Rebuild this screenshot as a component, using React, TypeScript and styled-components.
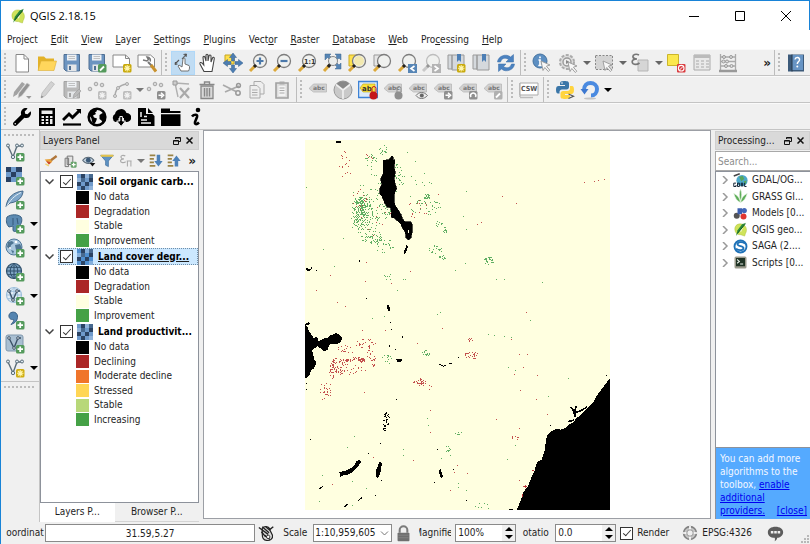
import React, { Fragment, useId } from "react";
import type { ReactNode } from "react";
import styled, { createGlobalStyle, css } from "styled-components";
import { FaWrench } from "react-icons/fa";

const UI_FONT = `"DejaVu Sans Condensed", "DejaVu Sans", "Noto Sans", sans-serif`;

const Global = createGlobalStyle`
  *, *::before, *::after { box-sizing: border-box; }
  html, body, #root { height: 100%; margin: 0; }
  body { background: #f0f0f0; color: #1e1e1e; font: 10px/14px ${UI_FONT}; overflow: hidden; }
  button, input, select { font: inherit; color: inherit; margin: 0; }
  svg { display: block; }
`;

/* ---------- layout ---------- */

const Window = styled.div`
  display: flex;
  flex-direction: column;
  height: 100vh;
  min-height: 400px;
  border: solid #1883d7;
  border-width: 1px 0 0 1px;
  background: #f0f0f0;
`;
const TitleBar = styled.header`
  display: flex;
  align-items: center;
  height: 29px;
  flex: none;
  padding-left: 9px;
  background: #fff;
  border-right: 1px solid #1883d7;
  color: #000;
`;
const AppTitle = styled.h1`
  flex: 1;
  margin: 0 0 0 4px;
  font: 400 11px/16px "Open Sans", "Noto Sans", sans-serif;
`;
const WindowButton = styled.button`
  display: grid;
  place-items: center;
  width: 46px;
  height: 29px;
  padding: 0;
  border: 0;
  background: none;
`;
const MenuBar = styled.nav`
  display: flex;
  align-items: center;
  flex: none;
  height: 19px;
  gap: 13px;
  padding-left: 6px;
  background: #fff;
`;
const MenuItem = styled.button`
  padding: 0;
  border: 0;
  background: none;
  line-height: 17px;
  white-space: nowrap;
`;
const ToolRow = styled.div`
  display: flex;
  flex: none;
  align-items: stretch;
  height: 27px;
  border-bottom: 1px solid #c4c4c4;
  border-top: 1px solid #fafafa;
`;
const ToolBar = styled.div<{ $last?: boolean; $lead?: boolean }>`
  display: flex;
  align-items: center;
  padding: 0 2px 0 3px;
  border: solid #bdbdbd;
  border-width: 0 ${(p) => (p.$last ? 0 : 1)}px 0 ${(p) => (p.$lead ? 1 : 0)}px;
`;
const Handle = styled.span`
  width: 2px;
  height: 20px;
  margin-right: 4px;
  background: repeating-linear-gradient(#bcbcbc 0 2px, transparent 2px 4px);
`;
const Tools = styled.div<{ $width: number }>`
  display: flex;
  align-items: center;
  justify-content: space-between;
  width: ${(p) => p.$width}px;
`;
const ToolButton = styled.button<{ $active?: boolean; $slim?: boolean }>`
  display: grid;
  place-items: center;
  flex: none;
  width: ${(p) => (p.$slim ? 8 : 24)}px;
  height: 24px;
  padding: 0;
  border: 1px solid ${(p) => (p.$active ? "#b0d8f8" : "transparent")};
  background: ${(p) => (p.$active ? "#c0dcf3" : "none")};
`;
const Spacer = styled.div`
  flex: 1;
`;
const More = styled.button`
  padding: 0 3px;
  border: 0;
  background: none;
  color: #222;
  font: 700 12px/14px "DejaVu Sans", sans-serif;
`;
const Body = styled.main`
  display: flex;
  flex: 1;
  min-height: 0;
`;
const SideBar = styled.div`
  display: flex;
  flex-direction: column;
  flex: none;
  width: 39px;
  border-right: 1px solid #c4c4c4;
`;
const SideHandle = styled.div`
  height: 2px;
  margin: 4px 3px;
  background: repeating-linear-gradient(90deg, #bcbcbc 0 2px, transparent 2px 4px);
`;
const SideRow = styled.div`
  display: flex;
  align-items: center;
  justify-content: space-between;
  height: 24px;
  padding: 0 2px;
`;
const SideEnd = styled.div`
  border-top: 1px solid #c4c4c4;
  margin-top: 1px;
`;
const Dock = styled.section<{ $width: number }>`
  display: flex;
  flex-direction: column;
  flex: none;
  width: ${(p) => p.$width}px;
  padding-top: 1px;
`;
const DockTitle = styled.div`
  display: flex;
  align-items: center;
  flex: none;
  height: 19px;
  padding: 0 2px;
  background: #d9d9d9;
  border: 1px solid #cfcfcf;
`;
const DockName = styled.h2`
  flex: 1;
  margin: 0;
  font: inherit;
  white-space: nowrap;
`;
const DockButton = styled.button`
  display: grid;
  place-items: center;
  width: 13px;
  height: 13px;
  padding: 0;
  border: 0;
  background: none;
  flex: none;
`;
const LayerTools = styled.div`
  display: flex;
  align-items: center;
  justify-content: space-between;
  flex: none;
  height: 21px;
  padding: 0 0 0 3px;
`;
const LayerTool = styled.button<{ $slim?: boolean }>`
  display: grid;
  place-items: center;
  width: ${(p) => (p.$slim ? 8 : 16)}px;
  height: 16px;
  padding: 0;
  border: 0;
  background: none;
`;
const LayerTree = styled.div`
  flex: 1;
  min-height: 0;
  padding-top: 1px;
  overflow: hidden;
  background: #fff;
  border: 1px solid #8d929b;
`;
const LayerHead = styled.div`
  display: flex;
  align-items: center;
  height: 17px;
  padding-left: 4px;
`;
const Twisty = styled.button`
  padding: 0;
  width: 13px;
  border: 0;
  background: none;
`;
const LayerTitle = styled.div<{ $selected?: boolean }>`
  display: flex;
  align-items: center;
  flex: 1;
  min-width: 0;
  height: 17px;
  padding-left: 1px;
  border: 1px dotted transparent;
  ${(p) =>
    p.$selected &&
    css`
      background: #cce8ff;
      border-color: #6f8ea8;
      text-decoration: underline;
    `}
`;
const LegendIcon = styled.span`
  margin-left: 4px;
`;
const LayerName = styled.label`
  margin-left: 5px;
  font-weight: 700;
  color: #000;
  white-space: nowrap;
`;
const Check = styled.input<{ $size: number }>`
  appearance: none;
  display: grid;
  place-items: center;
  flex: none;
  width: ${(p) => p.$size}px;
  height: ${(p) => p.$size}px;
  border: 1px solid #333;
  background: #fff;
  &:checked::after {
    content: "";
    width: 4px;
    height: 8px;
    margin-bottom: 2px;
    border: solid #333;
    border-width: 0 1px 1px 0;
    transform: rotate(42deg);
  }
`;
const Legend = styled.ul<{ $height: number }>`
  display: flex;
  flex-direction: column;
  height: ${(p) => p.$height}px;
  margin: 0;
  padding: 0 0 0 35px;
  list-style: none;
`;
const LegendRow = styled.li`
  display: flex;
  align-items: center;
  flex: 1;
  gap: 5px;
`;
const Swatch = styled.span<{ $color: string }>`
  width: 13px;
  height: 13px;
  background: ${(p) => p.$color};
`;
const Tabs = styled.div`
  display: flex;
  flex: none;
  height: 19px;
`;
const Tab = styled.button<{ $active?: boolean }>`
  flex: ${(p) => (p.$active ? 15 : 17)};
  padding: 0;
  border: solid ${(p) => (p.$active ? "#fff" : "#d4d4d4")};
  border-width: 0 0 1px;
  background: ${(p) => (p.$active ? "#fff" : "#f0f0f0")};
`;
const Canvas = styled.section`
  display: grid;
  place-items: center;
  flex: 1;
  min-width: 0;
  margin: 0 4px 3px;
  overflow: hidden;
  border: 1px solid #9c9fa5;
  background: #fff;
`;
const Search = styled.input`
  flex: none;
  width: 100%;
  height: 20px;
  margin-top: 1px;
  padding: 0 2px;
  border: 1px solid #a8a8a8;
  border-right: 0;
  background: #fff;
  &::placeholder { color: #8c8c8c; opacity: 1; }
`;
const ProviderPane = styled.div`
  flex: 1;
  min-height: 0;
  background: #fff;
  border: solid #8d929b;
  border-width: 1px 0 1px 1px;
  overflow: hidden;
`;
const Providers = styled.ul`
  display: flex;
  flex-direction: column;
  height: 99px;
  margin: 0;
  padding: 0;
  list-style: none;
`;
const Provider = styled.li`
  display: flex;
  align-items: center;
  flex: 1;
  padding-left: 4px;
  white-space: nowrap;
`;
const ProviderName = styled.span`
  margin-left: 4px;
`;
const Hint = styled.div`
  flex: none;
  padding: 4px 3px 2px 4px;
  margin-bottom: 3px;
  border-left: 1px solid #8d929b;
  background: #55aaff;
  color: #f4f8ff;
  line-height: 13px;
`;
const HintLink = styled.a`
  color: #0000f0;
`;
const CloseLink = styled(HintLink)`
  float: right;
`;
const StatusBar = styled.footer`
  display: flex;
  align-items: center;
  flex: none;
  height: 22px;
  padding-left: 4px;
`;
const StatusLabel = styled.label<{ $width: number }>`
  display: flex;
  justify-content: center;
  flex: none;
  width: ${(p) => p.$width}px;
  overflow: hidden;
  white-space: nowrap;
`;
const Gap = styled.div`
  padding: 0 4px 0 5px;
`;
const fieldBox = css`
  height: 18px;
  border: 1px solid #8a8a8a;
  background: #fff;
`;
const CoordField = styled.input`
  ${fieldBox}
  flex: 1 1 209px;
  min-width: 0;
  text-align: center;
`;
const StatusIcon = styled.button`
  display: grid;
  place-items: center;
  flex: none;
  width: 22px;
  height: 20px;
  padding: 0;
  border: 0;
  background: none;
`;
const Combo = styled.div`
  ${fieldBox}
  display: grid;
  align-items: center;
  flex: none;
  width: 79px;
`;
const ComboSelect = styled.select`
  grid-area: 1 / 1;
  appearance: none;
  width: 100%;
  height: 16px;
  padding: 0 0 0 1px;
  border: 0;
  background: none;
`;
const ComboArrow = styled.span`
  grid-area: 1 / 1;
  justify-self: end;
  padding-right: 2px;
  pointer-events: none;
`;
const Spin = styled.div`
  ${fieldBox}
  display: flex;
  flex: none;
  width: 61px;
`;
const SpinInput = styled.input`
  flex: 1;
  min-width: 0;
  padding: 0 0 0 2px;
  border: 0;
  background: none;
`;
const SpinButtons = styled.div`
  display: grid;
  width: 13px;
  background: #f0f0f0;
`;
const SpinButton = styled.button`
  display: grid;
  place-items: center;
  padding: 0;
  border: 0;
  background: none;
`;
const Crs = styled.button`
  display: flex;
  align-items: center;
  gap: 4px;
  margin-left: 13px;
  padding: 0;
  border: 0;
  background: none;
`;
const RenderCheck = styled.label`
  display: flex;
  align-items: center;
  gap: 4px;
  margin-left: 4px;
`;
const Bubble = styled(StatusIcon)`
  margin-left: 12px;
`;
const Grip = styled.span`
  align-self: flex-end;
  margin-left: 14px;
`;

/* ---------- icons ---------- */

const Ico = ({ s = 20, children }: { s?: number; children: ReactNode }) => (
  <svg width={s} height={s} viewBox="0 0 20 20" fill="none" aria-hidden="true">
    {children}
  </svg>
);
const Drop = ({ c = "#666" }: { c?: string }) => (
  <svg width="8" height="4" viewBox="0 0 8 4" aria-hidden="true"><path d="M0 0h8L4 4z" fill={c} /></svg>
);
const Lens = ({ handle = "#dca93a", ring = "#7d7d7d", children }: { handle?: string; ring?: string; children?: ReactNode }) => (
  <>
    <circle cx="12" cy="8" r="6.500" fill="#f0f1ef" stroke={ring} strokeWidth="1.300" />
    <path d="M7.500 12.500L2 18" stroke={handle} strokeWidth="3" />
    <path d="M8 12L6 14" stroke="#222" strokeWidth="3" opacity={handle === "#dca93a" ? 1 : 0.3} />
    {children}
  </>
);
const Badge = ({ c = "#549a5c", children }: { c?: string; children?: ReactNode }) => (
  <>
    <rect x="11" y="11" width="8.500" height="8.500" rx="1.500" fill={c} />
    {children ?? <path d="M15.200 12.500v5.500M12.500 15.200H18" stroke="#fff" strokeWidth="1.800" />}
  </>
);
const star = <path d="M15.200 12v6.500M12 15.200h6.500M13 13l4.500 4.500M17.500 13L13 17.500" stroke="#fff6b0" strokeWidth="1.100" />;
const grayStar = <path d="M15.200 12v6.500M12 15.200h6.500M13 13l4.500 4.500M17.500 13L13 17.500" stroke="#f2f2f2" strokeWidth="1.100" />;
const arrowR = <path d="M12.500 15.200H16M15 12.800l2.600 2.400-2.600 2.400" stroke="#fff" strokeWidth="1.500" />;
const Floppy = ({ a, b }: { a: string; b: string }) => (
  <>
    <path d="M2 1.500h15.500V18H4l-2-2z" fill={a} stroke={b} />
    <path d="M5 1.500h9.500v6H5z" fill="#eef1f4" />
    <path d="M6.500 3.500h6.500M6.500 5.500h6.500" stroke="#aaa" strokeWidth=".7" />
    <path d="M5.500 11.500h9V18h-9z" fill="#e4e6e8" /><path d="M7 13h2v4H7z" fill={b} />
  </>
);
const Tag = ({ children }: { children?: ReactNode }) => (
  <>
    <path d="M1.500 8l4-4h13v8h-13l-4-3z" fill="#d2d2d2" stroke="#b8b8b8" strokeWidth=".8" />
    <text x="5" y="10" fontSize="6" fontWeight="700" fontFamily="DejaVu Sans, sans-serif" fill="#777">abc</text>
    {children}
  </>
);
const Cursor = ({ x = 0, y = 0 }: { x?: number; y?: number }) => (
  <path transform={`translate(${x} ${y})`} d="M0 0l9 4-3.600 1.200 3.400 4-1.500 1.300-3.500-4L2 9.500z" fill="#f7f7f7" stroke="#999" strokeWidth=".9" />
);
const Globe = ({ c = "#4d7698", f = "#b9d2e6" }: { c?: string; f?: string }) => (
  <>
    <circle cx="9" cy="9" r="7.500" fill={f} stroke={c} strokeWidth="1.200" />
    <path d="M1.500 9h15M3 5.300h12M3 12.700h12M9 1.500v15M9 1.500c-5 4-5 11 0 15M9 1.500c5 4 5 11 0 15" stroke={c} strokeWidth="1" />
  </>
);
const Vee = ({ c = "#5b6e7a" }: { c?: string }) => (
  <>
    <path d="M3 4l5 11 4-11h5" stroke={c} strokeWidth="1.400" />
    <g fill="#dbe6ee" stroke={c}><circle cx="3" cy="3.500" r="1.500" /><circle cx="8" cy="15" r="1.700" /><circle cx="12" cy="3.500" r="1.500" /><circle cx="17" cy="3.500" r="1.500" /></g>
  </>
);
const Checker = ({ s = 20, tint = "#6f9acb" }: { s?: number; tint?: string }) => (
  <Ico s={s}>
    <rect width="20" height="20" fill={tint} />
    <path d="M5 0h5v5H5zM15 5h5v5h-5zM10 10h5v5h-5zM0 10h5v5H0zM5 15h5v5H5z" fill="#2b4363" />
    <path d="M10 0h5v5h-5zM0 5h5v5H0zM15 15h5v5h-5z" fill="#a9c5e4" opacity=".6" />
    <path d="M5 5h5v5H5zM15 0h5v5h-5z" fill="#47698f" />
  </Ico>
);
const QLogo = ({ s }: { s: number }) => (
  <Ico s={s}>
    <path d="M10.500 2.500C5 2 2 6 2.500 10.500c.4 4 3.500 6.800 8 6.500l5 1.800 1-3.300C20 10 17 3 10.500 2.500z" fill="#cfe35a" stroke="#a8bd33" strokeWidth=".6" />
    <path d="M10 6l3 2-2 5-3-1z" fill="#f6f9d8" />
    <path d="M17.500 1L4 18.500 6 11l6-8z" fill="#2b8a3a" /><path d="M16 3L6 15" stroke="#155c22" strokeWidth="1.300" />
  </Ico>
);
const Pin = ({ c }: { c: string }) => (
  <><path d="M14 12V8.500a2 2 0 014 0V12" stroke={c} strokeWidth="1" /><circle cx="15.500" cy="15.500" r="4" fill={c} /></>
);
const dots = (
  <g fill="#d8d8d8" stroke="#a6a6a6"><circle cx="3" cy="9" r="1.800" /><circle cx="9" cy="4" r="1.800" /><circle cx="15" cy="5" r="1.800" /></g>
);

type Tool = { name: string; icon?: ReactNode; active?: boolean; drop?: string };

const fileTools: Tool[] = [
  { name: "New", icon: <Ico><path d="M4 1.500h8l4.500 4.500v13H4z" fill="#fff" stroke="#888" /><path d="M12 1.500V6h4.500" stroke="#888" /></Ico> },
  { name: "Open", icon: <Ico><path d="M1 17V3.500h6l2 2h8V17z" fill="#e3b228" /><path d="M1 17.500L4 8h15.500L17 17.500z" fill="#ffd65c" stroke="#dcae35" strokeWidth=".6" /></Ico> },
  { name: "Save", icon: <Ico><Floppy a="#6c94c0" b="#4f6f93" /></Ico> },
  { name: "Save As", icon: <Ico><Floppy a="#6c94c0" b="#4f6f93" /><Badge><path d="M13 17.500l4-4" stroke="#fff" strokeWidth="1.800" /></Badge></Ico> },
  { name: "New Print Composer", icon: <Ico><path d="M1 2h12.500l4 3.500V14H1z" fill="#fff" stroke="#888" /><path d="M13.500 2v3.500h4" stroke="#888" /><Badge c="#c8a90c">{star}</Badge></Ico> },
  { name: "Composer Manager", icon: <Ico><path d="M1 2h12.500l4 3.500V14H1z" fill="#fff" stroke="#888" /><path d="M6 7l4 1 1.500-1.500L10 4c3 0 4 3 3 4.500" stroke="#777" strokeWidth="1.500" /><path d="M11 9l4 4" stroke="#777" strokeWidth="2" /><path d="M14 12l5 6.500" stroke="#c8922e" strokeWidth="3" /></Ico> },
];
const navTools: Tool[] = [
  { name: "Touch Zoom and Pan", active: true, icon: <Ico><path d="M8 18l-3-5 1-1 3 2 1-8c.3-1.500 2-1.500 2 0v5l4 1.500c1 1 .5 4-.5 5.500z" fill="#fff" stroke="#666" strokeWidth=".9" /><path d="M2 11l4-4M9 6l4-4.500M2 11.500l2.500-.5M2 11.500l.5-2.500M13.500 1l-3 .5M13.500 1l-.5 3" stroke="#555" strokeWidth="1.100" /></Ico> },
  { name: "Pan Map", icon: <Ico><path d="M6 18.500L2 11c-.5-1.500 1-2 2-1l1.800 2L5 4.500c0-1.500 1.800-1.500 2 0L8 8V2.500c0-1.600 2-1.600 2 0V8l1-5c.3-1.500 2-1.200 2 0v6l1.500-4c.6-1.300 2-.7 1.800.5L15 13l-1 5.500z" fill="#fff" stroke="#444" strokeWidth="1.100" /></Ico> },
  { name: "Pan Map to Selection", icon: <Ico><path d="M2 2h9v9H2z" fill="#ffe04a" stroke="#c7a520" /><path d="M10 0l3.500 4.500H11.500V8h-3V4.500h-2zM10 20l-3.500-4.500h2V12h3v3.500h2zM0 10l4.500-3.500v2H8v3H4.500v2zM20 10l-4.500 3.500v-2H12v-3h3.500v-2z" fill="#4c7db3" stroke="#35618f" strokeWidth=".5" /></Ico> },
  { name: "Zoom In", icon: <Ico><Lens><path d="M12 4.500v7M8.500 8h7" stroke="#4b78aa" strokeWidth="2.200" /></Lens></Ico> },
  { name: "Zoom Out", icon: <Ico><Lens><path d="M8.500 8h7" stroke="#4b78aa" strokeWidth="2.200" /></Lens></Ico> },
  { name: "Zoom to Native Resolution", icon: <Ico><Lens><text x="7" y="11" fontSize="7" fontWeight="700" fontFamily="DejaVu Sans Condensed, DejaVu Sans, sans-serif" fill="#333">1:1</text></Lens></Ico> },
  { name: "Zoom Full", icon: <Ico><path d="M3 1h6L7.500 2.500l2 2-2 2-2-2L3 7zM19 1v6l-2-2-2 2-2-2 2-2L13 1zM19 16h-6l2-2-2-2 2-2 2 2 2-2z" fill="#5685b5" stroke="#3c678f" strokeWidth=".5" /><circle cx="11" cy="8" r="4.500" fill="#eceeec" stroke="#888" /><path d="M7.500 12L2 18" stroke="#dca93a" strokeWidth="3" /><path d="M8 11.500L6 14" stroke="#222" strokeWidth="3" /></Ico> },
  { name: "Zoom to Selection", icon: <Ico><path d="M2 2h9v11H2z" fill="#ffe24a" stroke="#caa927" /><Lens><circle cx="12" cy="8" r="5" fill="#f2e9b0" /></Lens></Ico> },
  { name: "Zoom to Layer", icon: <Ico><path d="M2 2h9v11H2z" fill="#e6e6e6" stroke="#999" /><Lens /></Ico> },
  { name: "Zoom Last", icon: <Ico><Lens /><rect x="11" y="11" width="9" height="9" fill="#5685b5" /><path d="M17.500 13L14 15.500l3.500 2.500" stroke="#fff" strokeWidth="1.700" /></Ico> },
  { name: "Zoom Next", icon: <Ico><Lens handle="#c8c8c8" ring="#bdbdbd" /><rect x="11" y="11" width="9" height="9" fill="#b4b4b4" /><path d="M13.500 13l3.500 2.500-3.500 2.500" stroke="#fff" strokeWidth="1.700" /></Ico> },
  { name: "New Bookmark", icon: <Ico><path d="M2 2h4v14H2zM6 2h12v15H6z" fill="#d5d9dd" stroke="#999" /><path d="M11 1h4v8l-2-2-2 2z" fill="#4d7fb5" /><Badge c="#c8a90c">{star}</Badge></Ico> },
  { name: "Show Bookmarks", icon: <Ico><path d="M2 2h4v14H2zM6 2h12v15H6z" fill="#d5d9dd" stroke="#999" /><path d="M11 1h4v8l-2-2-2 2z" fill="#4d7fb5" /></Ico> },
  { name: "Refresh", icon: <Ico><path d="M1.500 9C2 3 10 0 14.500 4L17.500 1.500V9H10l2.500-2.500C9 4 5.500 5.500 4.500 9zM18.500 11C18 17 10 20 5.500 16l-3 2.500V11H10l-2.500 2.500C11 16 14.500 14.500 15.500 11z" fill="#4b82c0" stroke="#3a6da6" strokeWidth=".5" /></Ico> },
];
const attrTools: Tool[] = [
  { name: "Identify Features", icon: <Ico><circle cx="8" cy="8" r="7" fill="#5d8fc2" stroke="#44729f" /><path d="M8 3.500v1.800M6.500 7H8v5.500M6.300 12.500h3.500" stroke="#fff" strokeWidth="1.700" /><Cursor x={9} y={8} /></Ico> },
  { name: "Run Feature Action", icon: <Ico><circle cx="9" cy="9" r="7" fill="#dedede" stroke="#aaa" strokeWidth="2" strokeDasharray="3 1.500" /><circle cx="9" cy="9" r="4" fill="#eee" stroke="#999" strokeWidth="1.400" /><path d="M8 7l3.500 2L8 11z" fill="#888" /><Cursor x={10} y={9} /></Ico> },
  { name: "Feature actions", drop: "#666" },
  { name: "Select Features", icon: <Ico><path d="M1.500 2.500h17v14h-17z" fill="#d4d4d4" stroke="#888" strokeDasharray="2 1.500" /><Cursor x={9} y={8} /></Ico> },
  { name: "Selection modes", drop: "#666" },
  { name: "Select by Expression", icon: <Ico><path d="M8 7h10v11H8z" fill="#d6d6d6" stroke="#b5b5b5" /><path d="M9 2C6 .5 2.500 1.500 3 4c.3 1.500 2 2 4 2-3 0-5 1-4.800 3C2.500 12 7 12 9.500 10" stroke="#777" strokeWidth="1.700" /></Ico> },
  { name: "Expression selections", drop: "#666" },
  { name: "Deselect All", icon: <Ico><path d="M1.500 1.500h11v11h-11z" fill="#fbe84e" stroke="#cbb52b" /><rect x="11" y="11" width="8.500" height="8.500" rx="1" fill="#da3b3f" /><circle cx="15.200" cy="15.200" r="2.800" stroke="#fff" strokeWidth="1.100" /><path d="M13.500 17l3.500-3.500" stroke="#fff" /></Ico> },
  { name: "Open Attribute Table", icon: <Ico><path d="M2 2h16v15H2z" fill="#e9e9e9" stroke="#aaa" /><path d="M2 2h16v3H2z" fill="#bbb" /><path d="M4 8h3M9 8h3M14 8h3M4 11h3M9 11h3M14 11h3M4 14h3M9 14h3M14 14h3" stroke="#aaa" strokeWidth="1.200" /></Ico> },
  { name: "Open Field Calculator", icon: <Ico><path d="M2.500 1v17M17.500 1v17M2 4h16M2 8.500h16M2 13h16" stroke="#aaa" strokeWidth="1.300" /><g fill="#ddd" stroke="#999"><circle cx="6" cy="4" r="1.500" /><circle cx="13" cy="4" r="1.500" /><circle cx="5.500" cy="8.500" r="1.500" /><circle cx="9" cy="8.500" r="1.500" /><circle cx="8" cy="13" r="1.500" /><circle cx="13.500" cy="13" r="1.500" /></g><path d="M1 18h18" stroke="#999" strokeWidth="2.500" /></Ico> },
];
const helpTools: Tool[] = [
  { name: "Help Contents", icon: <Ico><path d="M2 1.500h16v17H2z" fill="#3c5a7a" /><path d="M6 2h11v15H6z" fill="#6794c4" /><path d="M6 1.500v17" stroke="#26384b" /><path d="M9 6.500c.5-3 5-2.500 4.500.5-.3 1.800-2.200 2-2.200 4" stroke="#fff" strokeWidth="1.500" /><circle cx="11.300" cy="13.500" r="1" fill="#fff" /></Ico> },
];
const editTools: Tool[] = [
  { name: "Current Edits", icon: <Ico><path d="M1 17l1-5 8-10 3 2-8 10.500z" fill="#a3a3a3" /><path d="M6 18l1-5 8-10 3 2-8 10.500z" fill="#949494" stroke="#ccc" strokeWidth=".7" /><path d="M14 16h5.500L17 19z" fill="#999" /></Ico> },
  { name: "Toggle Editing", icon: <Ico><path d="M4 18l1-5L14 1.500l3.500 2.500L8.500 15.500z" fill="#d2d2d2" stroke="#b5b5b5" strokeWidth=".7" /><path d="M4 18l.5-2.500L6.500 17z" fill="#888" /></Ico> },
  { name: "Save Layer Edits", icon: <Ico><Floppy a="#b9b9b9" b="#a2a2a2" /><path d="M11 18l1-4 5-5 2 2-5 5.500z" fill="#bbb" stroke="#999" strokeWidth=".6" /></Ico> },
  { name: "Add Feature", icon: <Ico>{dots}<Badge c="#bdbdbd">{grayStar}</Badge></Ico> },
  { name: "Add Circular String", icon: <Ico><path d="M3 17C3 9 7 5 15 4" stroke="#aaa" strokeWidth="1.400" /><g fill="#ddd" stroke="#aaa"><circle cx="3" cy="16" r="1.500" /><circle cx="6" cy="8" r="1.500" /><circle cx="15" cy="4" r="1.500" /></g><Badge c="#bdbdbd">{grayStar}</Badge></Ico> },
  { name: "Circular string modes", drop: "#777" },
  { name: "Move Feature", icon: <Ico>{dots}<Badge c="#8f8f8f">{arrowR}</Badge></Ico> },
  { name: "Node Tool", icon: <Ico><path d="M3 3l14 1M3 3l3 14" stroke="#b0b0b0" strokeWidth="1.400" /><path d="M1 1h4v4H1z" fill="#ccc" stroke="#999" /><path d="M8 8l9 10M17 8l-9 10" stroke="#aaa" strokeWidth="2.200" /></Ico> },
  { name: "Delete Selected", icon: <Ico><path d="M4 6h12v12.500H4z" fill="#d9d9d9" stroke="#888" strokeWidth="1.300" /><path d="M2.500 4.500h15M7.500 4V2h5v2M7.500 8v8.500M10 8v8.500M12.500 8v8.500" stroke="#888" strokeWidth="1.400" /></Ico> },
  { name: "Cut Features", icon: <Ico><path d="M1 5l13 6.500M3 12L17 6" stroke="#aaa" strokeWidth="1.800" /><circle cx="16" cy="13" r="2.200" stroke="#999" strokeWidth="1.500" /><circle cx="16.500" cy="5.500" r="1.900" stroke="#999" strokeWidth="1.500" /></Ico> },
  { name: "Copy Features", icon: <Ico><path d="M7 1.500h7l3 3V14H7z" fill="#eee" stroke="#aaa" /><path d="M3 5.500h7l3 3V18H3z" fill="#eee" stroke="#aaa" /><path d="M5 10h5.500M5 12.500h5.500M5 15h5.500" stroke="#aaa" /></Ico> },
  { name: "Paste Features", icon: <Ico><path d="M4 3h12v15H4z" fill="#ddd" stroke="#a0a0a0" strokeWidth="1.600" /><path d="M6.500 6h7v10h-7z" fill="#f3f3f3" /><path d="M7.500 1.500h5v3h-5z" fill="#aaa" /><path d="M7.500 8h5M7.500 10.500h5M7.500 13h5" stroke="#aaa" /></Ico> },
];
const labelTools: Tool[] = [
  { name: "Layer Labeling Options", icon: <Ico><Tag /></Ico> },
  { name: "Layer Diagram Options", icon: <Ico><circle cx="10" cy="10" r="9" fill="#c9c9c9" stroke="#999" /><path d="M10 10L3 4.500a9 9 0 0114 0z" fill="#888" /><path d="M10 10v9M10 10L3 4.500M10 10l7-5.500" stroke="#f0f0f0" strokeWidth="1.600" /></Ico> },
  { name: "Highlight Pinned Labels", icon: <Ico><path d="M.5 1.500h19v16H.5z" fill="#dcebfb" stroke="#3d82d6" strokeWidth="1.500" /><path d="M2 8l3-4h12v8H5z" fill="#fae23b" stroke="#b9a21b" strokeWidth=".6" /><text x="4" y="11" fontSize="7" fontWeight="700" fontFamily="DejaVu Sans, sans-serif" fill="#333">ab</text><Pin c="#c4161c" /></Ico> },
  { name: "Pin Labels", icon: <Ico><Tag /><Pin c="#8f8f8f" /></Ico> },
  { name: "Show Hide Labels", icon: <Ico><Tag /><path d="M8 15.500c3-4 8-4 11.500 0-3.500 4-8.500 4-11.500 0z" fill="#eee" stroke="#777" /><circle cx="13.800" cy="15.500" r="2" fill="#666" /></Ico> },
  { name: "Move Label", icon: <Ico><Tag /><Badge c="#8f8f8f">{arrowR}</Badge></Ico> },
  { name: "Rotate Label", icon: <Ico><Tag /><Badge c="#8f8f8f"><path d="M13 17a2.600 2.600 0 114.400 0" stroke="#fff" strokeWidth="1.500" /></Badge></Ico> },
  { name: "Change Label", icon: <Ico><Tag /><Badge c="#b0b0b0"><path d="M13 17.500l4-4" stroke="#fff" strokeWidth="1.800" /></Badge></Ico> },
];
const cswTools: Tool[] = [
  { name: "MetaSearch", icon: <Ico><path d="M1 17.500h13M1 3v14" stroke="#bbb" strokeWidth="1.500" /><path d="M1 3h18v12H1z" fill="#fff" stroke="#aaa" /><text x="2" y="11" fontSize="7" fontWeight="700" fontFamily="DejaVu Sans Condensed, DejaVu Sans, sans-serif" fill="#555">CSW</text></Ico> },
];
const pluginTools: Tool[] = [
  { name: "Python Console", icon: <Ico><path d="M9 1c4 0 5 .8 5 2.500V7c0 1.500-1 2.500-2.500 2.500H7c-1.500 0-2.500 1-2.500 2.500v1.500H3C1.500 13.500 1 12 1 9.500S2 6 3.500 6H10V5H5V3.500C5 1.800 6 1 9 1z" fill="#3a76a8" /><circle cx="7" cy="3" r=".8" fill="#fff" /><path d="M10.500 19c-4 0-5-.8-5-2.500v-3c0-1.500 1-2.500 2.500-2.500h4.500c1.500 0 2.500-1 2.500-2.500V6H17c1.500 0 2 1.500 2 4s-1 4-2.500 4H10v1h5v1.500c0 1.700-1.500 2.500-4.500 2.500z" fill="#ffd43f" /><path d="M13.500 14l5 2.200-5 2.300" stroke="#555" strokeWidth="1.200" /></Ico> },
  { name: "Reload plugin", icon: <Ico><path d="M4 10C4 5 7 3 10.500 3s6.500 2.500 6.500 6-2.500 6.500-6 6.500" stroke="#4a8ae0" strokeWidth="4" /><path d="M.5 9h8L4.500 14.500z" fill="#3d78d0" /><ellipse cx="10" cy="18.500" rx="6" ry="1" fill="#c4c4c4" /></Ico> },
  { name: "Choose plugin to reload", drop: "#000" },
];
const degradationTools: Tool[] = [
  { name: "Settings", icon: <FaWrench size={18} color="#000" /> },
  { name: "Calculate Indicators", icon: <Ico><path d="M2 1h16v18H2z" fill="#000" /><path d="M4.500 3.500h11v3.500h-11z" fill="#eee" /><path d="M4.500 10H7M8.800 10h2.500M4.500 13H7M8.800 13h2.500M4.500 16H7M8.800 16h2.500M13 10h2.500" stroke="#eee" strokeWidth="2" /><path d="M13 12h2.500v5H13z" fill="#eee" /></Ico> },
  { name: "Plot Data", icon: <Ico><path d="M1 13l6-6 3.500 3.500L18 3" stroke="#000" strokeWidth="3" /><path d="M14 2h5v5z" fill="#000" /><path d="M1 17.500h18" stroke="#000" strokeWidth="2.200" /></Ico> },
  { name: "Download Data", icon: <Ico><circle cx="10" cy="10" r="8.300" stroke="#000" strokeWidth="2.600" fill="#f4f4f4" /><path d="M2 8l2-4 5-2.500 1 2.500-2 1.500 1 1.500-3 1.500 1 2 3 1-1 3-2 3-2-3-.5-3zM12.500 8l3-2 3 2v5l-2.500 3.500-1.500-3-2-1.500z" fill="#000" /></Ico> },
  { name: "View Download Jobs", icon: <Ico><path d="M4.500 15A4.500 4.500 0 014 7 6 6 0 0115.500 6 4.500 4.500 0 0116 15h-3v-4H7.500v4z" fill="#000" /><path d="M8.800 9.500h2.600V14h3.100L10.100 19.500 5.700 14h3.100z" fill="#000" stroke="#f0f0f0" strokeWidth="1" /></Ico> },
  { name: "Reporting", icon: <Ico><path d="M2 1h8v6h6.500l2 2v10H2zM12 1l5 5h-5z" fill="#000" /><path d="M5 5v5M5 13h6M5 16h10M8 9.500h3" stroke="#f0f0f0" strokeWidth="1.500" /></Ico> },
  { name: "Load Data", icon: <Ico><path d="M0 1.500h9V4h10.500v2H0zM0 7.300h19.500V19H0z" fill="#000" /></Ico> },
  { name: "About", icon: <Ico><circle cx="12" cy="3" r="2.300" fill="#000" /><path d="M6 9.500c2-2.500 6-2.500 5 .5L9 15c-.5 3 2 2.500 4 .5" stroke="#000" strokeWidth="2.600" /></Ico> },
];

type SideTool = { name: string; icon: ReactNode; drop?: boolean };
const sideTools: SideTool[] = [
  { name: "Add Vector Layer", icon: <Ico><Vee /><Badge /></Ico> },
  { name: "Add Raster Layer", icon: <Ico><path d="M1 1h16v15H1z" fill="#6f9acb" /><path d="M1 1h5v5H1zM11 1h6v5h-6zM6 6h5v5H6zM1 11h5v5H1z" fill="#294061" /><Badge /></Ico> },
  { name: "Add SpatiaLite Layer", icon: <Ico><path d="M1 17C2 8 8 2 18 1c0 5-4 11-13 12z" fill="#7fa6c9" stroke="#44688a" /><path d="M1 18C5 10 9 6 16 2.500" stroke="#e3edf5" /><Badge /></Ico> },
  { name: "Add PostGIS Layers", drop: true, icon: <Ico><path d="M2 3c4-3 11-3 14 0 2 3 0 8-2 9h-2v4c-1 2-4 2-4 0v-4l-4 1C1 10 1 6 2 3z" fill="#5c8ab2" stroke="#3b6184" /><path d="M8 4v7M12 4l1 6" stroke="#35597a" /><Badge /></Ico> },
  { name: "Add WCS Layer", drop: true, icon: <Ico><circle cx="9" cy="9" r="8" fill="#aac7de" stroke="#50789a" /><path d="M3 4l4-1 2 2-3 2-1 4-3-2zM10 7l5-1 2 4-3 4-3-2zM6 12l3 1-1 3z" fill="#4f7592" /><circle cx="11" cy="4" r="1.300" fill="#fff" /><circle cx="5" cy="10" r="1" fill="#fff" /><Badge /></Ico> },
  { name: "Add WMS Layer", icon: <Ico><Globe c="#2f4f6b" f="#7fa5c5" /><Badge /></Ico> },
  { name: "Add WFS Layer", drop: true, icon: <Ico><Globe c="#9fc0dc" f="#e4eef6" /><path d="M4 5l4 9 4-9h3" stroke="#3b5166" strokeWidth="1.400" /><g fill="#fff" stroke="#3b5166"><circle cx="4" cy="5" r="1.300" /><circle cx="8" cy="14" r="1.300" /><circle cx="12" cy="5" r="1.300" /></g><Badge /></Ico> },
  { name: "Add Delimited Text Layer", icon: <Ico><path d="M4 5c1-4 8-4 8.500 1 .3 4-2 7-6.500 8.500 2-2 3-3.500 2.500-5C5.500 10 3.500 8 4 5z" fill="#5484b0" stroke="#3a6288" /><Badge /></Ico> },
  { name: "Add Virtual Layer", icon: <Ico><rect x="1" y="1" width="17" height="16" rx="2" fill="#a9bfd2" stroke="#8098ad" /><path d="M4 4l5 10 4-10h3" stroke="#3b5166" strokeWidth="1.400" /><g fill="#fff" stroke="#3b5166"><circle cx="4" cy="4" r="1.300" /><circle cx="9" cy="14" r="1.300" /><circle cx="13" cy="4" r="1.300" /></g><Badge /></Ico> },
  { name: "New Shapefile Layer", drop: true, icon: <Ico><Vee /><Badge c="#d0ae10">{star}</Badge></Ico> },
];

const layerTools: Tool[] = [
  { name: "Open Layer Styling", icon: <Ico s={14}><path d="M1 8l6 7 5-4-3-4z" fill="#e8a33a" /><path d="M3 10l4 5 3-3z" fill="#c9432e" /><path d="M10 9l8-6" stroke="#b0763a" strokeWidth="3.500" /><path d="M2 14l5 3" stroke="#f2d16c" strokeWidth="2" /></Ico> },
  { name: "Add Group", icon: <Ico s={14}><path d="M3 6h5v12H3zM6 3h8v12H6z" fill="#e3e3e3" stroke="#777" strokeWidth="1.400" /><Badge c="#68a46d" /></Ico> },
  { name: "Manage Layer Visibility", icon: <Ico s={14}><path d="M1 9c4-6 12-6 16 0-4 6-12 6-16 0z" fill="#c7d6e3" stroke="#5c6b78" strokeWidth="1.500" /><circle cx="9" cy="9" r="3.500" fill="#3c5a78" /><path d="M11 13h8l-4 5z" fill="#111" /></Ico> },
  { name: "Filter Legend", icon: <Ico s={14}><path d="M1 2h18l-7 8v8l-4-2v-6z" fill="#5f93c4" stroke="#3f6f9d" /><path d="M1 1h18v3H1z" fill="#e3c34d" /></Ico> },
  { name: "Filter by Expression", icon: <Ico s={14}><path d="M9 3C6 1 2 2 3 5c.3 1.500 2 2 4 2-3 0-5 1-4.800 3C2.500 13 7 13 9.500 11" stroke="#aaa" strokeWidth="1.700" /><path d="M11 10h7M12 10v8M17 10v8" stroke="#aaa" strokeWidth="1.500" /></Ico> },
  { name: "Expression filters", drop: "#777" },
  { name: "Expand All", icon: <Ico s={14}><path d="M1 2h8M1 7h6M1 12h6M1 17h8" stroke="#9a8346" strokeWidth="2.500" /><path d="M11 1h5v9h3.500l-6 8-6-8H11z" fill="#4d81b8" /></Ico> },
  { name: "Collapse All", icon: <Ico s={14}><path d="M1 2h8M1 7h6M1 12h6M1 17h8" stroke="#9a8346" strokeWidth="2.500" /><path d="M11 18h5v-8h3.500l-6-8-6 8H11z" fill="#4d81b8" /></Ico> },
];

const ToolSet = ({ tools, width, last, lead }: { tools: Tool[]; width: number; last?: boolean; lead?: boolean }) => (
  <ToolBar role="toolbar" $last={last} $lead={lead}>
    <Handle />
    <Tools $width={width}>
      {tools.map((t) => (
        <ToolButton key={t.name} aria-label={t.name} $active={t.active} $slim={!!t.drop}>
          {t.drop ? <Drop c={t.drop} /> : t.icon}
        </ToolButton>
      ))}
    </Tools>
  </ToolBar>
);

const FloatIcon = () => (
  <svg width="8" height="8" viewBox="0 0 8 8" fill="none" stroke="#111"><path d="M2.500 2V.5h5v4H6M2.500 1h5M.5 3.500h5v4h-5zM.5 4h5" /></svg>
);
const CloseIcon = () => (
  <svg width="7" height="7" viewBox="0 0 7 7" stroke="#111" strokeWidth="1.500"><path d="M.5.500l6 6M6.500.500l-6 6" /></svg>
);

/* ---------- map ---------- */

const GREEN = "#45a14d";
const RED = "#b93335";
const BLACK = "#000";

type Cluster = [cx: number, cy: number, rx: number, ry: number, n: number, color: string];
const clusters: Cluster[] = [
  [180, 232, 34, 48, 150, GREEN], [178, 222, 16, 34, 80, GREEN], [200, 275, 50, 40, 60, GREEN],
  [213, 312, 30, 16, 45, GREEN], [195, 180, 45, 35, 26, GREEN], [210, 75, 20, 18, 16, GREEN],
  [245, 45, 12, 16, 16, GREEN], [290, 115, 14, 36, 24, GREEN], [245, 232, 26, 26, 30, GREEN],
  [250, 330, 28, 28, 22, GREEN], [378, 184, 10, 8, 24, GREEN], [375, 215, 48, 24, 34, GREEN],
  [412, 266, 12, 8, 9, GREEN], [432, 284, 6, 9, 10, GREEN], [400, 343, 22, 14, 22, GREEN],
  [424, 363, 10, 9, 16, GREEN], [562, 376, 15, 11, 24, GREEN], [260, 424, 14, 12, 9, GREEN],
  [350, 165, 70, 60, 16, GREEN], [225, 120, 30, 60, 14, GREEN],
  [170, 190, 26, 36, 14, RED], [132, 90, 18, 46, 14, RED], [345, 220, 36, 28, 15, RED],
  [220, 240, 50, 60, 12, RED], [200, 65, 16, 10, 5, RED], [120, 60, 30, 20, 3, RED],
  [375, 652, 13, 9, 20, GREEN], [255, 672, 16, 16, 12, GREEN], [472, 894, 10, 6, 8, GREEN],
  [438, 940, 9, 12, 9, GREEN], [540, 1114, 26, 12, 9, GREEN],
  [110, 690, 24, 22, 44, RED], [92, 705, 8, 24, 26, RED], [138, 675, 16, 5, 18, RED],
  [165, 671, 16, 5, 20, RED], [184, 675, 8, 7, 22, RED], [120, 705, 20, 12, 14, RED],
  [190, 625, 34, 16, 20, RED], [205, 650, 8, 20, 14, RED], [216, 675, 6, 20, 14, RED],
  [135, 642, 26, 12, 16, RED], [150, 705, 50, 18, 18, RED], [74, 768, 18, 32, 26, RED],
  [512, 660, 22, 12, 26, RED], [352, 740, 16, 11, 26, RED], [375, 750, 18, 18, 8, RED],
  [506, 612, 10, 7, 8, RED], [641, 906, 14, 6, 8, RED], [675, 1054, 9, 6, 10, RED],
  [257, 840, 8, 14, 18, BLACK], [252, 862, 10, 12, 18, BLACK], [250, 882, 7, 5, 12, BLACK],
];
const specks: Record<string, number[][]> = {
  [RED]: [[850, 140], [878, 138], [892, 135], [910, 133], [602, 184], [645, 205], [528, 268], [541, 262], [675, 530], [328, 408], [270, 445], [193, 437], [86, 421], [45, 466], [108, 500], [131, 514], [194, 381], [183, 586], [190, 772], [386, 826], [386, 890], [584, 851], [656, 766], [707, 721], [706, 792], [737, 837], [655, 878], [640, 718], [666, 697], [629, 612], [655, 656], [678, 657], [336, 976], [467, 991], [497, 1014], [653, 1034], [448, 1065], [92, 1046], [216, 965], [422, 578], [251, 585], [348, 624], [460, 1012], [410, 178]],
  [GREEN]: [[14, 157], [127, 308], [66, 341], [98, 394], [494, 167], [487, 244], [494, 282], [491, 383], [462, 406], [585, 433], [610, 433], [722, 440], [688, 556], [408, 536], [417, 532], [317, 52], [341, 78], [306, 433], [313, 433], [289, 465], [248, 543], [562, 597], [578, 601], [610, 602], [629, 606], [622, 695], [643, 705], [802, 730], [742, 782], [617, 971], [643, 930], [494, 1065], [470, 1044], [470, 1057], [420, 970], [448, 960], [377, 850], [380, 870], [160, 904], [139, 936], [305, 959], [307, 943], [63, 1020], [156, 998], [152, 1037], [53, 1099], [195, 1060], [152, 1110], [212, 550]],
  [BLACK]: [[175, 378], [196, 488], [45, 405], [271, 583], [281, 641], [303, 602], [304, 607], [265, 630], [264, 634], [472, 667], [286, 792], [236, 923], [201, 955], [409, 943], [457, 1003], [399, 1042], [241, 1034], [223, 1080], [495, 1095], [15, 744], [15, 763], [26, 912], [747, 871], [914, 720], [266, 562]],
};
const speckled = (() => {
  let seed = 7;
  const rnd = () => ((seed = (seed * 16807) % 2147483647) / 2147483647);
  const snap = (v: number) => Math.round(v / 3) * 3;
  const paths: Record<string, string> = { [GREEN]: "", [RED]: "", [BLACK]: "" };
  const dot = (x: number, y: number, c: string) => {
    paths[c] += `M${snap(x - 12)} ${snap(y - 15)}h3v3h-3z`;
  };
  for (const [cx, cy, rx, ry, n, c] of clusters) {
    for (let i = 0; i < n; i++) {
      const a = rnd() * Math.PI * 2;
      const r = Math.sqrt(rnd());
      dot(cx + Math.cos(a) * r * rx, cy + Math.sin(a) * r * ry, c);
    }
  }
  for (const c of Object.keys(specks)) for (const [x, y] of specks[c]) dot(x, y, c);
  return paths;
})();

const MapView = () => (
  <svg width="305" height="370" viewBox="0 0 915 1110" role="img" aria-label="Map" shapeRendering="crispEdges">
    <rect width="915" height="1110" fill="#ffffe0" />
    <path d={speckled[GREEN]} fill={GREEN} opacity=".85" />
    <path d={speckled[RED]} fill={RED} opacity=".85" />
    <path d={speckled[BLACK]} fill={BLACK} />
    <g transform="translate(-12 -15)">
      <path stroke="#000" strokeWidth="2" d="M247 76l15-2 6-4 4-8 5 4-1 7 5 2-1 25 3 10-3 20 2 15 5 15-6 12-2 18 2 20 9 12 10 16 5 14 7 8 18 1 4 7-1 27-3 13-8 8-7-8-2-16-8-12-5-12-10-10-10-8-10-4 2-14-4-14-10-2-8-14-7-18-7-8 1-16 5-12-3-16 7-14z" />
      <path d="M320 284h5v9h-5z" fill="#ffffe0" />
      <path d="M317 330l5 3-6 16-6 9-3-4 5-12zM104 19h15v5h-12zM13 399h9v4h8v-6h3v5l-6 5h-9zM174 375h3v7h-3zM257 511l6-2 4 12-1 7-5 1zM13 566l10-4 3 4-5 5h-8z" />
    </g>
    <g transform="translate(-12 555)">
      <path stroke="#000" strokeWidth="3" d="M12 0l6 5 4 13 8 12 7 10 11-2 2 12 15-5 7-5 8 2 10-10 15-6 10 5 7 8-4 10-8 6-12-1-10 3-6 5-2 10-10 5-10-8-10-7-10 7-10 6 5 12 3 15 7 13-7 14-8 6-5 12-10 10h-5z" />
      <path stroke="#000" strokeWidth="4" d="M117 443l20-5 15-8 10-10 7-11 5-2 4 5-10 12-12 14-13 8-15 3-8 4zM236 414l5 1-3 16-2 15-7 11-3-3 1-19 6-13z" />
      <path d="M928 158l-13 17-15 20-15 20-7 17-16 13-12 15-12 12-12 6-6 12-15 8-10 10-15 6-15-2-15 8-10 8-5 17-3 27-6 20-4 12-10 4-7 12-5 20-10 20-10 25-12 15-8 25-10 23-5 8h283z" />
      <path d="M808 246l8 8 4 14M826 243l-4 12-1 22M858 246l-20 12-15 4M800 290l20-5" stroke="#000" strokeWidth="5" fill="none" />
      <path d="M288 104l5-2h8l2 5-8 4-6-1zM414 436l5-2 2 12 3 8-3 3-3-7zM445 116l8-2M55 492l12-10M172 527l12-10M130 547l10-10M623 552h14" stroke="#000" strokeWidth="3" />
      <path d="M415 117l6 3 6 4 8-4" stroke="#000" strokeWidth="3" fill="none" />
      <path d="M692 434h6v4h-6zM668 482h10v4h-10zM662 508h5v8h-5z" fill={RED} />
    </g>
  </svg>
);

/* ---------- data ---------- */

const menus: [string, string, string][] = [
  ["Pro", "j", "ect"], ["", "E", "dit"], ["", "V", "iew"], ["", "L", "ayer"], ["", "S", "ettings"], ["", "P", "lugins"],
  ["Vect", "o", "r"], ["", "R", "aster"], ["", "D", "atabase"], ["", "W", "eb"], ["Pro", "c", "essing"], ["", "H", "elp"],
];
const base: [string, string][] = [["No data", "#000"], ["Degradation", "#ab2727"], ["Stable", "#ffffe0"], ["Improvement", "#45a146"]];
const layers: { name: string; selected?: boolean; height: number; legend: [string, string][] }[] = [
  { name: "Soil organic carb...", height: 58, legend: base },
  { name: "Land cover degr...", selected: true, height: 58, legend: base },
  {
    name: "Land productivit...",
    height: 87,
    legend: [["No data", "#000"], ["Declining", "#ab2727"], ["Moderate decline", "#f0752b"], ["Stressed", "#ffd655"], ["Stable", "#b8d879"], ["Increasing", "#45a146"]],
  },
];
const providers: { name: string; icon: ReactNode }[] = [
  { name: "GDAL/OG...", icon: <Ico s={15}><circle cx="12" cy="10" r="7.500" fill="#4ba7c9" /><path d="M8 5l5-1 2 4-4 3zM14 11l4-1-1 5z" fill="#58a65a" /><path d="M1 4l8-3" stroke="#444" strokeWidth="2" /><path d="M1 13.500h3M1 13.500v4.500h3v-2M6 18v-4.500h2.500V18H6M11 18v-4.500h2V18M11 16h2M15.500 13v5H18" stroke="#123" strokeWidth="1.300" /></Ico> },
  { name: "GRASS GI...", icon: <Ico s={15}><path d="M10 18C9 12 6 8 1 6c2 6 4 10 9 12zM10 18c1-6 4-10 9-12-2 6-4 10-9 12zM10 16C8 10 8 5 10 0c2 5 2 10 0 16z" fill="#5fae5a" stroke="#dff0dc" strokeWidth=".8" /></Ico> },
  { name: "Models [0...", icon: <Ico s={15}><circle cx="5" cy="13" r="4" fill="#555" /><path d="M6 3h6v8H6z" fill="#3d5fb0" /><circle cx="15" cy="6" r="3.500" fill="#4267b8" /><circle cx="14" cy="14" r="4" fill="#e0352f" /></Ico> },
  { name: "QGIS geo...", icon: <QLogo s={15} /> },
  { name: "SAGA (2....", icon: <Ico s={15}><circle cx="10" cy="10" r="8" stroke="#1f72b8" strokeWidth="2.500" fill="#fff" /><path d="M16 6c-4-3-10-2-10 1s8 2 8 5-5 4-10 1" stroke="#1f72b8" strokeWidth="2.500" /></Ico> },
  { name: "Scripts [0...", icon: <Ico s={15}><rect x="2" y="2" width="16" height="16" rx="2" fill="#9a9a8c" /><path d="M4 4h12v11H4z" fill="#1f3324" /><path d="M5.500 6l3 2.500-3 2.500M9.500 12h4" stroke="#e8efe8" strokeWidth="1.400" /></Ico> },
];

const SpinBox = ({ id, value }: { id: string; value: string }) => (
  <Spin>
    <SpinInput id={id} defaultValue={value} />
    <SpinButtons>
      <SpinButton aria-label="Increase"><svg width="8" height="4" viewBox="0 0 8 4"><path d="M0 4h8L4 0z" /></svg></SpinButton>
      <SpinButton aria-label="Decrease"><Drop c="#000" /></SpinButton>
    </SpinButtons>
  </Spin>
);

const LayerGroup = ({ layer }: { layer: (typeof layers)[number] }) => {
  const id = useId();
  return (
    <Fragment>
      <LayerHead>
        <Twisty aria-label="Collapse">
          <svg width="9" height="6" viewBox="0 0 9 6" fill="none" stroke="#444" strokeWidth="1.500"><path d="M.5.500l4 4 4-4" /></svg>
        </Twisty>
        <LayerTitle $selected={layer.selected}>
          <Check type="checkbox" id={id} defaultChecked $size={13} />
          <LegendIcon><Checker s={16} tint={layer.selected ? "#4f8fd0" : undefined} /></LegendIcon>
          <LayerName htmlFor={id}>{layer.name}</LayerName>
        </LayerTitle>
      </LayerHead>
      <Legend $height={layer.height}>
        {layer.legend.map(([label, color]) => (
          <LegendRow key={label}><Swatch $color={color} />{label}</LegendRow>
        ))}
      </Legend>
    </Fragment>
  );
};

export default function App() {
  return (
    <Window>
      <Global />
      <TitleBar>
        <QLogo s={16} />
        <AppTitle>QGIS 2.18.15</AppTitle>
        <WindowButton aria-label="Minimize"><svg width="10" height="10" stroke="#000"><path d="M0 5.500h10" /></svg></WindowButton>
        <WindowButton aria-label="Maximize"><svg width="10" height="10" stroke="#000" fill="none"><path d="M.5.500h9v9h-9z" /></svg></WindowButton>
        <WindowButton aria-label="Close"><svg width="10" height="10" stroke="#000"><path d="M0 0l10 10M10 0L0 10" /></svg></WindowButton>
      </TitleBar>
      <MenuBar>
        {menus.map(([a, key, b]) => (
          <MenuItem key={a + key + b}>{a}<u>{key}</u>{b}</MenuItem>
        ))}
      </MenuBar>
      <ToolRow>
        <ToolSet tools={fileTools} width={149} />
        <ToolSet tools={navTools} width={347} />
        <ToolSet tools={attrTools} width={210} last />
        <Spacer />
        <More aria-label="More tools">»</More>
        <ToolSet tools={helpTools} width={24} last lead />
      </ToolRow>
      <ToolRow>
        <ToolSet tools={editTools} width={284} />
        <ToolSet tools={labelTools} width={199} />
        <ToolSet tools={cswTools} width={24} />
        <ToolSet tools={pluginTools} width={58} last />
      </ToolRow>
      <ToolRow>
        <ToolSet tools={degradationTools} width={198} last />
      </ToolRow>
      <Body>
        <SideBar>
          <SideHandle />
          {sideTools.map((t) => (
            <SideRow key={t.name}>
              <ToolButton aria-label={t.name}>{t.icon}</ToolButton>
              {t.drop && <ToolButton $slim aria-label={`${t.name} options`}><Drop c="#000" /></ToolButton>}
            </SideRow>
          ))}
          <SideEnd><SideHandle /></SideEnd>
        </SideBar>
        <Dock $width={159}>
          <DockTitle>
            <DockName>Layers Panel</DockName>
            <DockButton aria-label="Float"><FloatIcon /></DockButton>
            <DockButton aria-label="Close"><CloseIcon /></DockButton>
          </DockTitle>
          <LayerTools>
            {layerTools.map((t) => (
              <LayerTool key={t.name} aria-label={t.name} $slim={!!t.drop}>{t.drop ? <Drop c={t.drop} /> : t.icon}</LayerTool>
            ))}
            <More aria-label="More layer tools">»</More>
          </LayerTools>
          <LayerTree>
            {layers.map((l) => <LayerGroup key={l.name} layer={l} />)}
          </LayerTree>
          <Tabs role="tablist">
            <Tab role="tab" aria-selected="true" $active>Layers P...</Tab>
            <Tab role="tab" aria-selected="false">Browser P...</Tab>
          </Tabs>
        </Dock>
        <Canvas><MapView /></Canvas>
        <Dock $width={95}>
          <DockTitle>
            <DockName>Processing...</DockName>
            <DockButton aria-label="Float"><FloatIcon /></DockButton>
            <DockButton aria-label="Close"><CloseIcon /></DockButton>
          </DockTitle>
          <Search aria-label="Search" placeholder="Search..." />
          <ProviderPane>
            <Providers>
              {providers.map((p) => (
                <Provider key={p.name}>
                  <Twisty aria-label="Expand">
                    <svg width="12" height="8" viewBox="0 0 12 8" fill="none" stroke="#999" strokeWidth="1.500"><path d="M3 0l4 4-4 4" /></svg>
                  </Twisty>
                  {p.icon}
                  <ProviderName>{p.name}</ProviderName>
                </Provider>
              ))}
            </Providers>
          </ProviderPane>
          <Hint>
            You can add more algorithms to the toolbox, <HintLink href="#enable">enable additional providers.</HintLink>
            <CloseLink href="#close">[close]</CloseLink>
          </Hint>
        </Dock>
      </Body>
      <StatusBar>
        <StatusLabel $width={40} htmlFor="coord">oordinat</StatusLabel>
        <CoordField id="coord" defaultValue="31.59,5.27" />
        <StatusIcon aria-label="Toggle extents">
          <Ico s={17}><path d="M5 4c3-4 9-2 9 2l3 6c1 4-3 7-7 6-4 0-5-4-5-7z" fill="#ddd" stroke="#222" strokeWidth="1.400" /><path d="M1 3l11 8M5 2l8 7M8 12l6 5M18 2l-5 4M4 8l5 6M9 2l5 4" stroke="#222" strokeWidth="1.600" /><circle cx="12" cy="14" r="2" fill="#fff" stroke="#222" /></Ico>
        </StatusIcon>
        <StatusLabel $width={36} htmlFor="scale">Scale</StatusLabel>
        <Combo>
          <ComboSelect id="scale"><option>1:10,959,605</option></ComboSelect>
          <ComboArrow><svg width="9" height="5" viewBox="0 0 9 5" fill="none" stroke="#777"><path d="M1 .5l3.500 3.500L8 .5" /></svg></ComboArrow>
        </Combo>
        <StatusIcon aria-label="Lock scale">
          <Ico s={17}><path d="M5.500 9V6a4.500 4.500 0 019 0v3" stroke="#7b7b7b" strokeWidth="2.400" /><rect x="3" y="9" width="14" height="10" rx="1" fill="#6f6f6f" /><path d="M4 12h12M4 15h12" stroke="#868686" /></Ico>
        </StatusIcon>
        <Gap><StatusLabel $width={32} htmlFor="mag">Magnifier</StatusLabel></Gap>
        <SpinBox id="mag" value="100%" />
        <StatusLabel $width={39} htmlFor="rot">otatio</StatusLabel>
        <SpinBox id="rot" value="0.0" />
        <RenderCheck><Check type="checkbox" defaultChecked $size={13} />Render</RenderCheck>
        <Crs>
          <Ico s={16}><circle cx="10" cy="10" r="8" fill="#c4c4c4" stroke="#808080" strokeWidth="2" /><path d="M10 1v5M10 14v5M1 10h5M14 10h5" stroke="#fff" strokeWidth="2" /><circle cx="10" cy="10" r="4" fill="#eee" stroke="#888" /></Ico>
          EPSG:4326
        </Crs>
        <Bubble aria-label="Messages">
          <Ico s={17}><path d="M10 2c5 0 9 2.500 9 6.500S15 15 12 15c0 2-2 4-3 4 .5-1.500.5-3 0-4-5 0-8-2.500-8-6.500S5 2 10 2z" fill="#5c5c5c" /><path d="M4.500 7h3v3h-3zM8.500 7h3v3h-3zM12.500 7h3v3h-3z" fill="#eee" /></Ico>
        </Bubble>
        <Grip><svg width="10" height="10" fill="#b8b8b8"><path d="M7 1h2v2H7zM4 4h2v2H4zM7 4h2v2H7zM1 7h2v2H1zM4 7h2v2H4zM7 7h2v2H7z" /></svg></Grip>
      </StatusBar>
    </Window>
  );
}
